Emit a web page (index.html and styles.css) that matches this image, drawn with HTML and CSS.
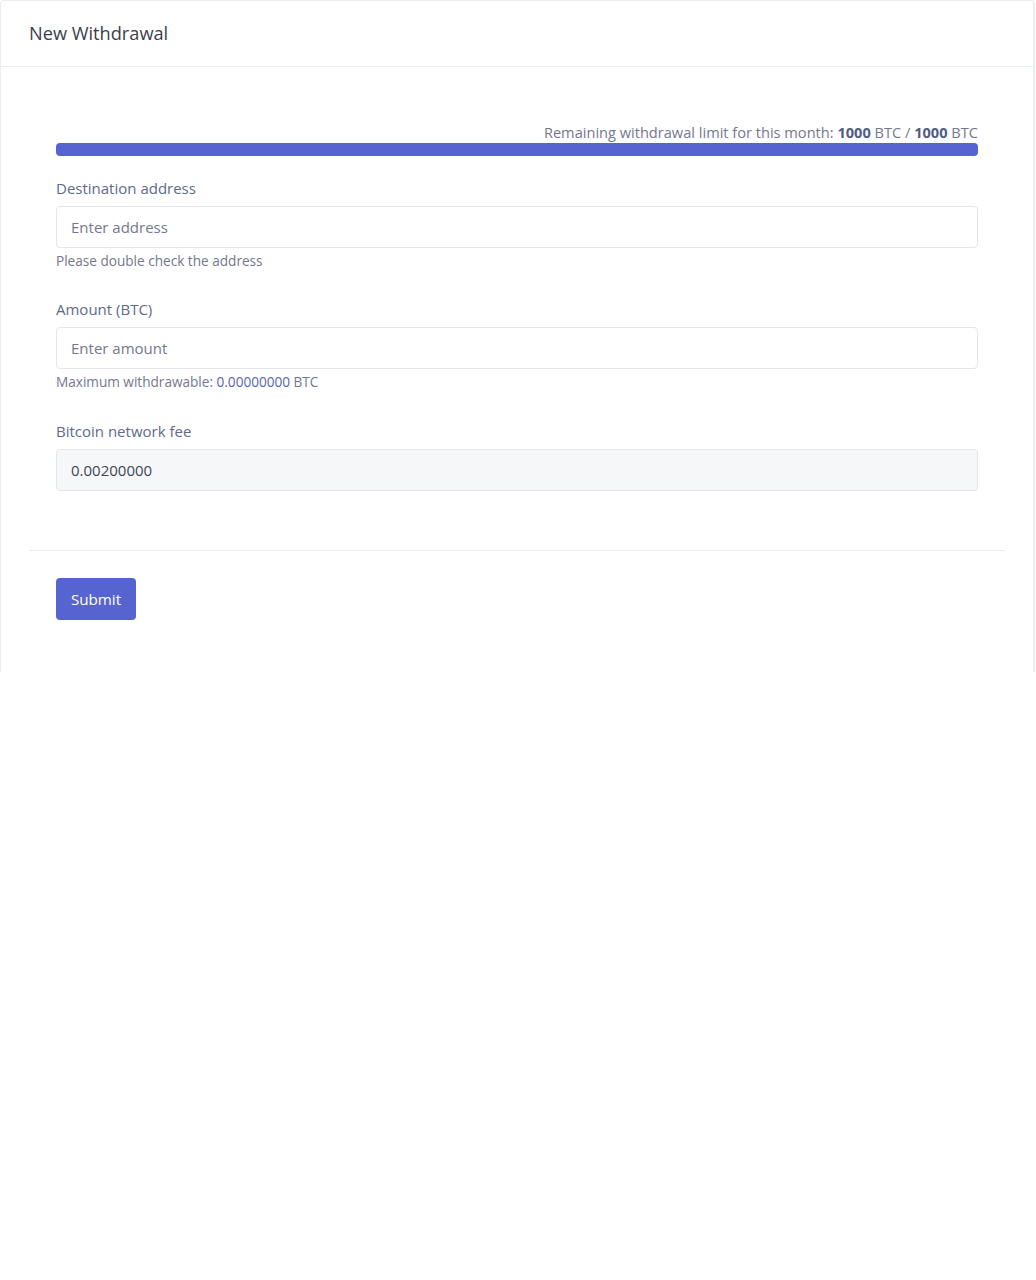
FILE: index.html
```html
<!DOCTYPE html>
<html lang="en">
<head>
  <meta charset="UTF-8" />
  <meta name="viewport" content="width=device-width, initial-scale=1.0"/>
  <title>New Withdrawal</title>
  <link rel="stylesheet" href="styles.css">
</head>
<body>
  <div class="wd-card">
    <!-- Header -->
    <div class="wd-header">
      <h4>New Withdrawal</h4>
    </div>

    <div class="wd-body">
      <form class="wd-form">
        <div class="wd-limit">
          Remaining withdrawal limit for this month: <b>1000</b> BTC / <b>1000</b> BTC
        </div>
        <div class="wd-progress">
          <div class="wd-progress-bar" style="width: 100%;"></div>
        </div>

        <div class="wd-group">
          <label for="wd-address">Destination address</label>
          <input type="text" id="wd-address" class="wd-input" placeholder="Enter address" />
          <small>Please double check the address</small>
        </div>

        <div class="wd-group">
          <label for="wd-amount">Amount (BTC)</label>
          <input type="text" id="wd-amount" class="wd-input" placeholder="Enter amount" />
          <small>Maximum withdrawable: <span class="wd-accent">0.00000000</span> BTC</small>
        </div>

        <div class="wd-group wd-group-fee">
          <label for="wd-fee">Bitcoin network fee</label>
          <input type="text" id="wd-fee" class="wd-input" value="0.00200000" readonly />
        </div>
      </form>

      <hr class="wd-divider" />

      <div class="wd-footer">
        <button type="button" class="wd-btn">Submit</button>
      </div>
    </div>
  </div>
</body>
</html>
```

FILE: styles.css
```css
:root {
  --wd-accent: #5664d2;
  --wd-border: #eaedf0;
  --wd-text: #505d69;
  --wd-muted: #74788d;
}

* {
  box-sizing: border-box;
}

body {
  margin: 0;
  background: #fff;
  font-family: "Open Sans", "DejaVu Sans", sans-serif;
  color: var(--wd-text);
}

.wd-card {
  width: 1035px;
  border: 1px solid var(--wd-border);
  border-right-width: 2px;
  border-bottom: none;
  border-radius: 4px 4px 0 0;
  background: #fff;
}

.wd-header {
  height: 66px;
  padding: 0 28px;
  display: flex;
  align-items: center;
  border-bottom: 1px solid var(--wd-border);
}

.wd-header h4 {
  margin: 0 0 1px;
  font-size: 18.2px;
  font-weight: 500;
  color: #3b3f4c;
}

.wd-body {
  padding: 55px 28px 52px;
}

.wd-form {
  padding: 0 27px;
}

.wd-limit {
  text-align: right;
  font-size: 14.6px;
  line-height: 20px;
  color: var(--wd-muted);
}

.wd-limit b {
  font-weight: 700;
  color: #505d82;
}

.wd-progress {
  height: 13px;
  margin-top: 1px;
  border-radius: 4px;
  background: #eff2f7;
  overflow: hidden;
}

.wd-progress-bar {
  height: 100%;
  background: var(--wd-accent);
}

.wd-group {
  display: flex;
  flex-direction: column;
  margin-top: 29px;
}

.wd-progress + .wd-group {
  margin-top: 22px;
}

.wd-group-fee {
  margin-top: 30px;
}

.wd-group label {
  font-size: 15px;
  font-weight: 500;
  line-height: 20px;
  margin-bottom: 8px;
  color: #606a8a;
}

.wd-input {
  height: 42px;
  padding: 0 14px;
  border: 1px solid #e3e6ea;
  border-radius: 4px;
  font-family: inherit;
  font-size: 15px;
  color: var(--wd-text);
  background: #fff;
  outline: none;
}

.wd-input::placeholder {
  color: var(--wd-muted);
}

.wd-input[readonly] {
  background: #f6f7f9;
  color: #404652;
}

.wd-group small {
  margin-top: 4px;
  font-size: 13.6px;
  line-height: 18px;
  color: var(--wd-muted);
}

.wd-accent {
  color: #5664b0;
}

.wd-divider {
  border: none;
  border-top: 1px solid var(--wd-border);
  margin: 59px 0 27px;
}

.wd-footer {
  padding: 0 27px;
}

.wd-btn {
  width: 80px;
  height: 42px;
  border: none;
  border-radius: 4px;
  background: var(--wd-accent);
  color: #fff;
  font-family: inherit;
  font-size: 15.2px;
  cursor: pointer;
}
```
